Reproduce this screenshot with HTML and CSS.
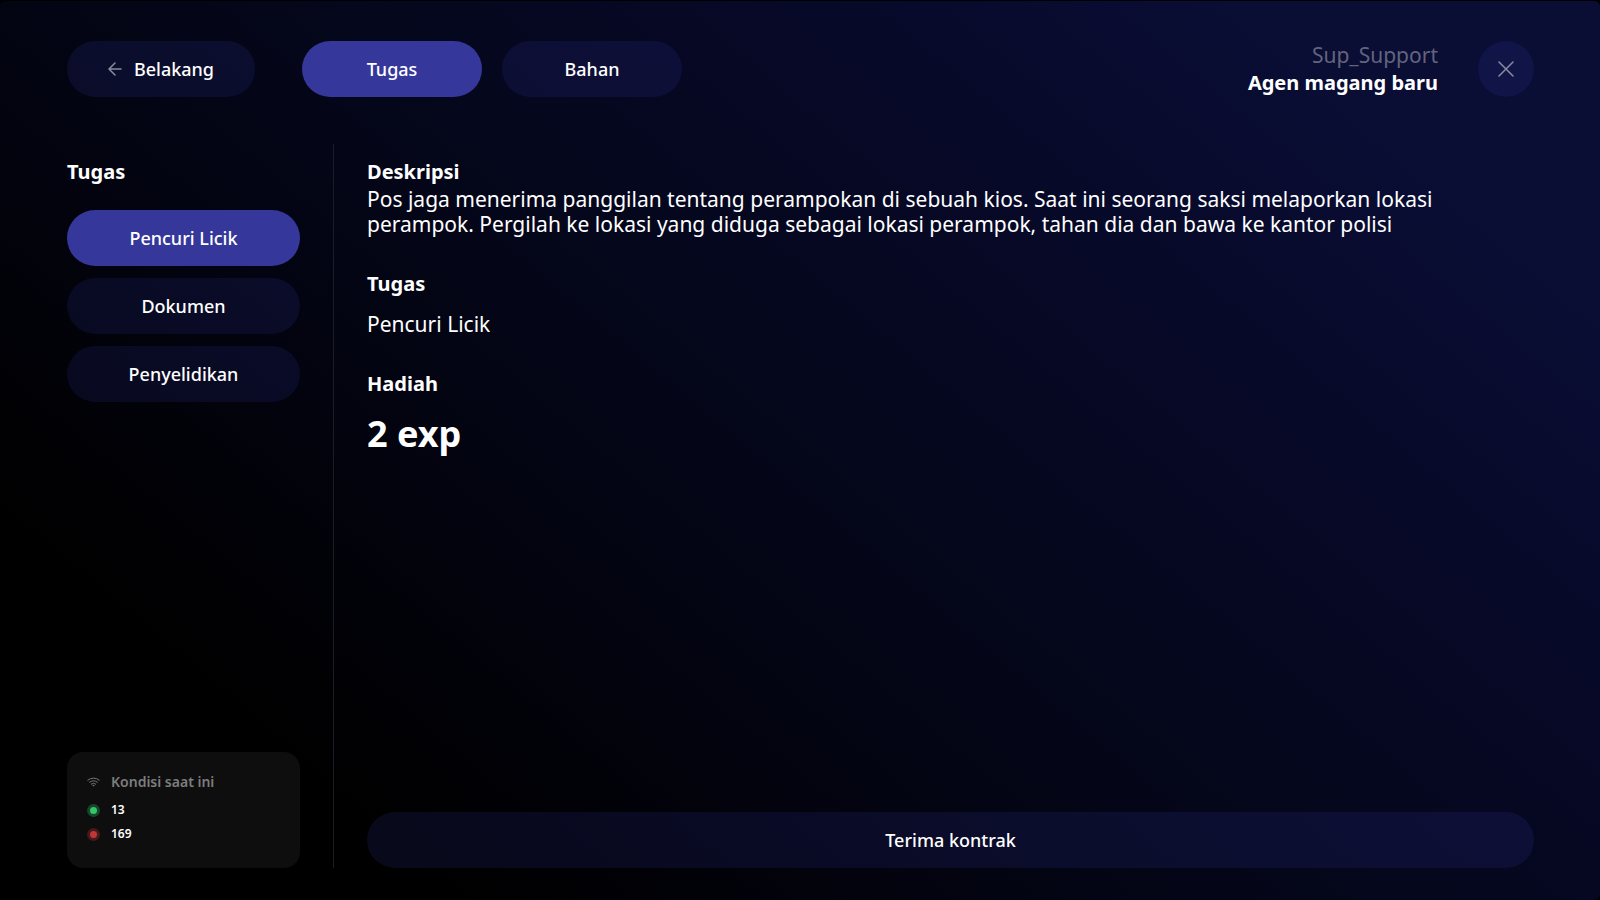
FILE: index.html
```html
<!DOCTYPE html>
<html lang="id">
<head>
  <meta charset="UTF-8" />
  <meta name="viewport" content="width=device-width, initial-scale=1" />
  <title>Tugas</title>
  <link rel="stylesheet" href="styles.css">
</head>
<body>
  <div class="screen">
    <header class="header">
      <button class="btn btn-back" type="button">
        <svg class="icon-arrow" viewBox="0 0 14 14" aria-hidden="true">
          <path d="M13 7H1M7 1L1 7l6 6" />
        </svg>
        Belakang
      </button>

      <nav class="tabs">
        <button class="btn btn-tab active" type="button">Tugas</button>
        <button class="btn btn-tab" type="button">Bahan</button>
      </nav>

      <div class="user">
        <div class="user-name">Sup_Support</div>
        <div class="user-rank">Agen magang baru</div>
      </div>

      <button class="btn-close" type="button" aria-label="Tutup">
        <svg class="icon-close" viewBox="0 0 16 16" aria-hidden="true">
          <path d="M1 1l14 14M15 1L1 15" />
        </svg>
      </button>
    </header>

    <div class="layout">
      <aside class="sidebar">
        <h2 class="title">Tugas</h2>
        <div class="task-list">
          <button class="btn btn-task active" type="button">Pencuri Licik</button>
          <button class="btn btn-task" type="button">Dokumen</button>
          <button class="btn btn-task" type="button">Penyelidikan</button>
        </div>

        <div class="status">
          <div class="status-row status-title">
            <svg class="icon-wifi" viewBox="0 0 14 10" aria-hidden="true">
              <path d="M.8 3Q7-1.6 13.2 3M2.8 5.2Q7 2 11.2 5.2M4.6 7.2Q7 5.4 9.4 7.2" />
              <path class="icon-wifi-dot" d="M5.6 8.2h2.8L7 9.8z" />
            </svg>
            Kondisi saat ini
          </div>
          <div class="status-row"><span class="dot green"></span>13</div>
          <div class="status-row"><span class="dot red"></span>169</div>
        </div>
      </aside>

      <main class="content">
        <section class="block">
          <h2 class="title">Deskripsi</h2>
          <p class="text">Pos jaga menerima panggilan tentang perampokan di sebuah kios. Saat ini seorang saksi melaporkan lokasi perampok. Pergilah ke lokasi yang diduga sebagai lokasi perampok, tahan dia dan bawa ke kantor polisi</p>
        </section>

        <section class="block spaced">
          <h2 class="title">Tugas</h2>
          <p class="text">Pencuri Licik</p>
        </section>

        <section class="block spaced">
          <h2 class="title">Hadiah</h2>
          <p class="reward">2 exp</p>
        </section>

        <button class="btn btn-accept" type="button">Terima kontrak</button>
      </main>
    </div>
  </div>
</body>
</html>
```
FILE: styles.css
```css
* {
  box-sizing: border-box;
}

body {
  margin: 0;
  background: #000000;
  color: #ffffff;
  font-family: "Noto Sans", "Open Sans", sans-serif;
}

h2, p {
  margin: 0;
}

.screen {
  display: flex;
  flex-direction: column;
  gap: 47px;
  min-height: 100vh;
  padding: 40px 66px 32px 67px;
  border-top: 1px solid #000000;
  border-radius: 6px;
  background: linear-gradient(40deg, #000000 17%, #030411 38%, #05071d 54%, #070928 70%, #0a0d34 86%, #0a0d34 100%);
}

.header {
  display: flex;
  align-items: center;
}

.btn {
  display: flex;
  align-items: center;
  justify-content: center;
  height: 56px;
  padding: 0;
  border: none;
  border-radius: 28px;
  background: rgba(52, 62, 180, 0.15);
  color: #ffffff;
  font-family: inherit;
  font-size: 18px;
  font-weight: 500;
  cursor: pointer;
}

.btn.active {
  background: #35379b;
}

.btn-back {
  gap: 12px;
  width: 188px;
}

.tabs {
  display: flex;
  gap: 20px;
  margin-left: 47px;
}

.btn-tab {
  width: 180px;
}

.user {
  margin-left: auto;
  line-height: 27px;
  text-align: right;
}

.user-name {
  color: #62647f;
  font-size: 21px;
}

.user-rank {
  font-size: 20px;
  font-weight: 700;
}

.btn-close {
  display: flex;
  align-items: center;
  justify-content: center;
  width: 56px;
  height: 56px;
  margin-left: 40px;
  padding: 0;
  border: none;
  border-radius: 50%;
  background: rgba(52, 62, 180, 0.15);
  cursor: pointer;
}

.icon-arrow,
.icon-close {
  width: 16px;
  height: 16px;
  fill: none;
  stroke: #8a8b9c;
  stroke-width: 1.5;
  stroke-linecap: round;
  stroke-linejoin: round;
}

.icon-arrow {
  width: 14px;
  height: 14px;
}

.layout {
  display: flex;
  flex: 1;
}

.sidebar {
  display: flex;
  flex-direction: column;
  width: 267px;
  padding: 14px 33px 0 0;
  border-right: 1px solid #1b1c26;
}

.title {
  font-size: 20px;
  font-weight: 700;
  line-height: 28px;
}

.task-list {
  display: flex;
  flex-direction: column;
  gap: 12px;
  margin-top: 24px;
}

.status {
  display: flex;
  flex-direction: column;
  gap: 4px;
  margin-top: auto;
  padding: 20px 20px 24px;
  border-radius: 16px;
  background: #0e0e0e;
}

.status-row {
  display: flex;
  align-items: center;
  gap: 11px;
  font-size: 12px;
  font-weight: 600;
  line-height: 20px;
}

.status-title {
  margin-bottom: 4px;
  color: #7d7d7d;
  font-size: 14px;
}

.icon-wifi {
  width: 13px;
  height: 10px;
  fill: none;
  stroke: #7d7d7d;
  stroke-width: 1;
  stroke-linecap: round;
}

.icon-wifi-dot {
  fill: #7d7d7d;
  stroke: none;
}

.dot {
  width: 13px;
  height: 13px;
  border: 3px solid;
  border-radius: 50%;
}

.dot.green {
  border-color: #17452a;
  background: #33c46c;
}

.dot.red {
  border-color: #451a1a;
  background: #c43535;
}

.content {
  display: flex;
  flex-direction: column;
  flex: 1;
  gap: 33px;
  padding: 14px 0 0 33px;
}

.text {
  max-width: 1080px;
  margin-top: 1px;
  font-size: 21px;
  line-height: 25px;
}

.spaced .text,
.spaced .reward {
  margin-top: 14px;
}

.reward {
  font-size: 36px;
  font-weight: 700;
  line-height: 44px;
}

.btn-accept {
  margin-top: auto;
}
```
